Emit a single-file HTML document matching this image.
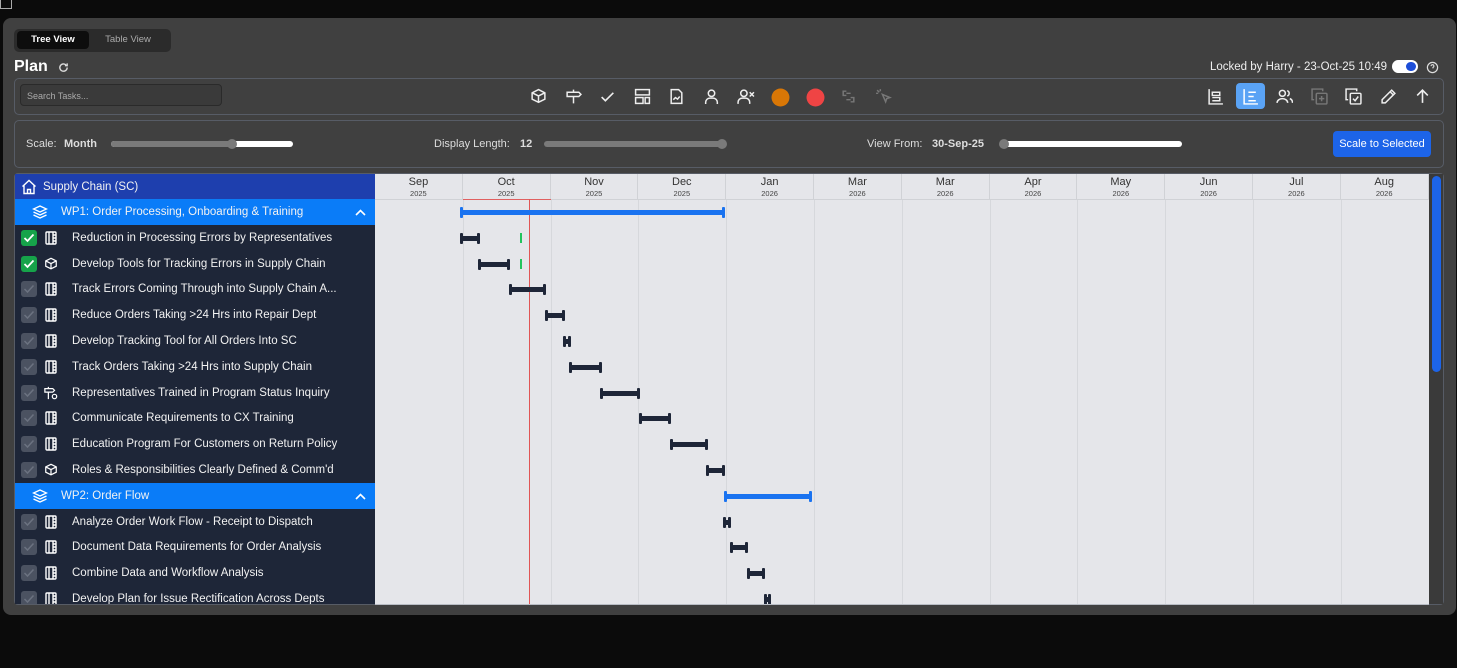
<!DOCTYPE html>
<html><head><meta charset="utf-8"><style>
*{box-sizing:border-box;margin:0;padding:0}
body{width:1457px;height:668px;background:#0b0b0b;font-family:"Liberation Sans",sans-serif;position:relative;overflow:hidden;color:#fff}
.a{position:absolute}
.panel{left:3px;top:18px;width:1453px;height:597px;background:#404040;border-radius:8px}
.box{border:1px solid #575c66;border-radius:5px}
.row{position:absolute;left:15px;width:360px;height:26px;font-size:11.5px}
.cb{position:absolute;left:6px;width:16px;height:16px;border-radius:3px;background:#4b5261}
.cb.g{background:#16a34a}
.cb svg{position:absolute;left:2px;top:3px}
.ic{position:absolute;left:29px;top:6px}
.t{position:absolute;left:57px;top:7px;white-space:nowrap;color:#f2f2f2}
.wp{background:#0a7cf8}
.bar{position:absolute;height:5px;background:#1e2638;border-left:2px solid #1e2638;border-right:2px solid #1e2638}
.bar:before,.bar:after{content:"";position:absolute;top:-3px;width:3px;height:11px;background:#1e2638;border-radius:1px}
.bar:before{left:-2px}.bar:after{right:-2px}
.bb{background:#1a73f0}.bb:before,.bb:after{background:#1a73f0}
.mh{position:absolute;top:174px;height:26px;text-align:center;color:#333;border-right:1px solid #d0d2d6}
.mh b{display:block;font-weight:normal;font-size:11px;margin-top:2px}
.mh i{display:block;font-style:normal;font-size:7.5px;color:#444;margin-top:1px}
.vl{position:absolute;top:200px;height:404px;width:1px;background:#d6d8dc}
.tb svg{position:absolute;top:88px}
#clip{position:absolute;left:0;top:0;width:1457px;height:668px;clip-path:inset(0 0 64px 0)}
</style></head><body>
<div class="a" style="left:0;top:0;width:12px;height:9px;border:1px solid #aaa;border-top:none"></div>
<div class="a panel"></div>
<div class="a" style="left:14px;top:29px;width:157px;height:23px;background:#2b2b2b;border-radius:5px"></div>
<div class="a" style="left:17px;top:31px;width:72px;height:18px;background:#0d0d0d;border-radius:4px;font-size:9.5px;font-weight:bold;text-align:center;line-height:18px">Tree View</div>
<div class="a" style="left:92px;top:31px;width:72px;height:18px;font-size:9.5px;color:#aaa;text-align:center;line-height:18px">Table View</div>
<div class="a" style="left:14px;top:58px;font-size:16px;font-weight:bold">Plan</div>
<svg class="a" style="left:58px;top:62px" width="11" height="11" viewBox="0 0 12 12"><path d="M10 6a4 4 0 1 1-1.2-2.8M10 1.5v2.5H7.5" fill="none" stroke="#ddd" stroke-width="1.5"/></svg>
<div class="a" style="left:1210px;top:61px;font-size:11.5px;color:#eee">Locked by Harry - 23-Oct-25 10:49</div>
<div class="a" style="left:1392px;top:60px;width:26px;height:13px;background:#fff;border-radius:7px"><div class="a" style="left:14px;top:2px;width:10px;height:9px;border-radius:5px;background:#1d4ed8"></div></div>
<svg class="a" style="left:1426px;top:61px" width="13" height="13" viewBox="0 0 14 14"><circle cx="7" cy="7" r="5.5" fill="none" stroke="#ddd" stroke-width="1.3"/><path d="M5.5 5.5a1.5 1.5 0 1 1 2 1.4V8" fill="none" stroke="#ddd" stroke-width="1.2"/></svg>

<div class="a box" style="left:14px;top:78px;width:1430px;height:37px"></div>
<div class="a" style="left:20px;top:84px;width:202px;height:22px;background:#3a3a3a;border:1px solid #2a2a2a;border-radius:4px;font-size:9px;color:#aaa;padding:6px 6px">Search Tasks...</div>
<div class="tb">
<svg class="a" style="left:530px" width="17" height="17" viewBox="0 0 16 16" fill="none" stroke="#eee" stroke-width="1.4"><path d="M8 1.5l6 3v6l-6 3-6-3v-6zM2 4.5l6 3 6-3M8 7.5v6"/></svg>
<svg class="a" style="left:565px" width="17" height="17" viewBox="0 0 16 16" fill="none" stroke="#eee" stroke-width="1.4"><path d="M2 4h11l2 2-2 2H2zM8 1.5V4M8 8v6.5"/></svg>
<svg class="a" style="left:599px" width="17" height="17" viewBox="0 0 16 16" fill="none" stroke="#eee" stroke-width="1.5"><path d="M2.5 8.5l3.5 3.5 7.5-7.5"/></svg>
<svg class="a" style="left:634px" width="17" height="17" viewBox="0 0 16 16" fill="none" stroke="#eee" stroke-width="1.4"><rect x="1.5" y="1.5" width="13" height="5"/><rect x="1.5" y="9" width="7" height="5.5"/><rect x="10.5" y="9" width="4" height="5.5"/></svg>
<svg class="a" style="left:668px" width="17" height="17" viewBox="0 0 16 16" fill="none" stroke="#eee" stroke-width="1.4"><path d="M3 1.5h7l3 3v10H3zM5 11l2-2 2 1.5 2-2.5"/></svg>
<svg class="a" style="left:703px" width="17" height="17" viewBox="0 0 16 16" fill="none" stroke="#eee" stroke-width="1.4"><circle cx="8" cy="5" r="3"/><path d="M2.5 15v-1.5a4 4 0 0 1 4-4h3a4 4 0 0 1 4 4V15"/></svg>
<svg class="a" style="left:737px" width="18" height="17" viewBox="0 0 17 16" fill="none" stroke="#eee" stroke-width="1.4"><circle cx="6.5" cy="5" r="3"/><path d="M1 15v-1.5a4 4 0 0 1 4-4h3a4 4 0 0 1 4 4V15M12 4l4 4M16 4l-4 4"/></svg>
<svg class="a" style="left:771px" width="19" height="19" viewBox="0 0 18 18"><circle cx="9" cy="9" r="8.5" fill="#d97706"/></svg>
<svg class="a" style="left:806px" width="19" height="19" viewBox="0 0 18 18"><circle cx="9" cy="9" r="8.5" fill="#ef4444"/></svg>
<svg class="a" style="left:840px" width="17" height="17" viewBox="0 0 16 16" fill="none" stroke="#777" stroke-width="1.4"><path d="M6 3H3v4h3M10 9h3v4h-3M6 5h4M6 11h4"/></svg>
<svg class="a" style="left:875px" width="17" height="17" viewBox="0 0 16 16" fill="none" stroke="#777" stroke-width="1.4"><path d="M7 6l7 3-3 1-1 3zM2 2l2 2M5 1v2M1 5h2"/></svg>
</div>
<svg class="a" style="left:1207px;top:88px" width="17" height="17" viewBox="0 0 16 16" fill="none" stroke="#eee" stroke-width="1.4"><path d="M2 1v14h13M5 4h7v3H5zM5 9h7v3H5"/></svg>
<div class="a" style="left:1236px;top:83px;width:29px;height:26px;background:#5aa3f5;border-radius:4px"></div>
<svg class="a" style="left:1242px;top:88px" width="17" height="17" viewBox="0 0 16 16" fill="none" stroke="#fff" stroke-width="1.4"><path d="M2 1v14h13M6 4h7M6 8h5M6 12h7"/></svg>
<svg class="a" style="left:1276px;top:88px" width="17" height="17" viewBox="0 0 16 16" fill="none" stroke="#eee" stroke-width="1.4"><circle cx="6" cy="5" r="2.8"/><path d="M1 14a5 4 0 0 1 10 0M10.5 2.5a2.6 2.6 0 0 1 0 5M13 10a4 4 0 0 1 2.5 4"/></svg>
<svg class="a" style="left:1311px;top:88px" width="17" height="17" viewBox="0 0 16 16" fill="none" stroke="#777" stroke-width="1.4"><rect x="5" y="5" width="10" height="10" rx="1"/><path d="M3 11H1V1h10v2M10 7.5v5M7.5 10h5"/></svg>
<svg class="a" style="left:1345px;top:88px" width="17" height="17" viewBox="0 0 16 16" fill="none" stroke="#eee" stroke-width="1.4"><rect x="5" y="5" width="10" height="10" rx="1"/><path d="M3 11H1V1h10v2M7.5 10l2 2 3-4"/></svg>
<svg class="a" style="left:1380px;top:88px" width="17" height="17" viewBox="0 0 16 16" fill="none" stroke="#eee" stroke-width="1.4"><path d="M11 2l3 3-9 9H2v-3zM9.5 3.5l3 3"/></svg>
<svg class="a" style="left:1414px;top:88px" width="17" height="17" viewBox="0 0 16 16" fill="none" stroke="#eee" stroke-width="1.5"><path d="M8 14V2M3 7l5-5 5 5"/></svg>

<div class="a box" style="left:14px;top:120px;width:1430px;height:48px"></div>
<div class="a" style="left:26px;top:138px;font-size:11px;color:#ddd">Scale:</div>
<div class="a" style="left:64px;top:138px;font-size:11px;font-weight:bold;color:#ddd">Month</div>
<div class="a" style="left:111px;top:141px;width:182px;height:6px;border-radius:3px;background:#fff"><div class="a" style="left:0;top:0;width:122px;height:6px;border-radius:3px;background:#7a7a7a"></div><div class="a" style="left:116px;top:-2px;width:10px;height:10px;border-radius:5px;background:#7a7a7a"></div></div>
<div class="a" style="left:434px;top:138px;font-size:11px;color:#ddd">Display Length:</div>
<div class="a" style="left:520px;top:138px;font-size:11px;font-weight:bold;color:#ddd">12</div>
<div class="a" style="left:544px;top:141px;width:182px;height:6px;border-radius:3px;background:#7a7a7a"><div class="a" style="left:173px;top:-2px;width:10px;height:10px;border-radius:5px;background:#7a7a7a"></div></div>
<div class="a" style="left:867px;top:138px;font-size:11px;color:#ddd">View From:</div>
<div class="a" style="left:932px;top:138px;font-size:11px;font-weight:bold;color:#ddd">30-Sep-25</div>
<div class="a" style="left:1000px;top:141px;width:182px;height:6px;border-radius:3px;background:#fff"><div class="a" style="left:-1px;top:-2px;width:10px;height:10px;border-radius:5px;background:#7a7a7a"></div></div>
<div class="a" style="left:1333px;top:131px;width:98px;height:26px;background:#1d64e8;border-radius:4px;font-size:11px;text-align:center;line-height:26px;color:#fff">Scale to Selected</div>

<div class="a" style="left:14px;top:173px;width:1430px;height:432px;border:1px solid #575c66;border-radius:4px"></div>
<div class="a" style="left:15px;top:174px;width:360px;height:430px;background:#1e2638"></div>
<div class="a" style="left:375px;top:174px;width:1054px;height:430px;background:#e5e6ea"></div>
<div class="a" style="left:375px;top:199px;width:1054px;height:1px;background:#d0d2d6"></div>
<div class="a" style="left:1429px;top:174px;width:14px;height:430px;background:#3a3a3a"></div>
<div class="a" style="left:1432px;top:176px;width:9px;height:196px;background:#1d64e8;border-radius:5px"></div>

<div class="row" style="top:174px;background:#1e3fae"><svg class="a" style="left:6px;top:5px" width="16" height="16" viewBox="0 0 16 16" fill="none" stroke="#fff" stroke-width="1.4"><path d="M1.5 7.5L8 1.5l6.5 6M3 6v8.5h10V6M6.5 14.5v-4h3v4"/></svg><span class="t" style="left:28px">Supply Chain (SC)</span></div>

<div id="clip"><div id="rows"></div><div id="chart"></div></div>
<script>
var L='<svg width="14" height="14" viewBox="0 0 14 14" fill="none" stroke="#fff" stroke-width="1.4"><rect x="2" y="1" width="10" height="12" rx="1"/><path d="M5 1v12M9 1v12M9 4h3M9 7h3M9 10h3"/></svg>';
var P='<svg width="14" height="14" viewBox="0 0 16 16" fill="none" stroke="#fff" stroke-width="1.4"><path d="M8 1.5l6 3v6l-6 3-6-3v-6zM2 4.5l6 3 6-3M8 7.5v6"/></svg>';
var S='<svg width="14" height="14" viewBox="0 0 16 16" fill="none" stroke="#fff" stroke-width="1.4"><path d="M1 3h9l2 2-2 2H1zM5 1v2M5 7v8"/><circle cx="12" cy="12" r="2.5"/></svg>';
var Y='<svg width="16" height="16" viewBox="0 0 16 16" fill="none" stroke="#fff" stroke-width="1.3"><path d="M8 2l6.5 3L8 8 1.5 5zM1.5 8L8 11l6.5-3M1.5 11L8 14l6.5-3"/></svg>';
var CK='<svg width="12" height="10" viewBox="0 0 12 10" fill="none" stroke-width="1.8"><path d="M1.5 5l3 3 6-6.5" stroke="#fff"/></svg>';
var CKd='<svg width="12" height="10" viewBox="0 0 12 10" fill="none" stroke-width="1.5"><path d="M1.5 5l3 3 6-6.5" stroke="#6b7280"/></svg>';
var rows=[['w','WP1: Order Processing, Onboarding & Training',460,725],
['g','Reduction in Processing Errors by Representatives',460,480,L,520],
['g','Develop Tools for Tracking Errors in Supply Chain',478,510,P,520],
['n','Track Errors Coming Through into Supply Chain A...',509,546,L],
['n','Reduce Orders Taking >24 Hrs into Repair Dept',545,565,L],
['n','Develop Tracking Tool for All Orders Into SC',563,571,L],
['n','Track Orders Taking >24 Hrs into Supply Chain',569,602,L],
['n','Representatives Trained in Program Status Inquiry',600,640,S],
['n','Communicate Requirements to CX Training',639,671,L],
['n','Education Program For Customers on Return Policy',670,708,L],
['n','Roles & Responsibilities Clearly Defined & Comm\'d',706,725,P],
['w','WP2: Order Flow',724,812],
['n','Analyze Order Work Flow - Receipt to Dispatch',723,731,L],
['n','Document Data Requirements for Order Analysis',730,748,L],
['n','Combine Data and Workflow Analysis',747,765,L],
['n','Develop Plan for Issue Rectification Across Depts',764,771,L]];
var h='',c='';
var m=['Sep','Oct','Nov','Dec','Jan','Mar','Mar','Apr','May','Jun','Jul','Aug'],yr=['2025','2025','2025','2025','2026','2026','2026','2026','2026','2026','2026','2026'];
for(var i=0;i<12;i++){var x=375+i*87.8;c+='<div class="mh" style="left:'+x+'px;width:87.8px"><b>'+m[i]+'</b><i>'+yr[i]+'</i></div>';if(i>0)c+='<div class="vl" style="left:'+x+'px"></div>';}
c+='<div class="a" style="left:463px;top:199px;width:88px;height:1px;background:#e06060"></div><div class="a" style="left:529px;top:199px;width:1px;height:405px;background:#e05555"></div>';
rows.forEach(function(r,i){var top=199+25.8*i;
 if(r[0]=='w'){h+='<div class="row wp" style="top:'+top+'px"><span class="a" style="left:17px;top:5px">'+Y+'</span><span class="t" style="left:46px">'+r[1]+'</span><svg class="a" style="left:340px;top:10px" width="11" height="7" viewBox="0 0 11 7" fill="none" stroke="#fff" stroke-width="1.6"><path d="M1 6l4.5-4.5L10 6"/></svg></div>';}
 else{h+='<div class="row" style="top:'+top+'px"><div class="cb '+(r[0]=='g'?'g':'')+'" style="top:5px">'+(r[0]=='g'?CK:CKd)+'</div><span class="ic">'+r[4]+'</span><span class="t">'+r[1]+'</span></div>';}
 var y=top+11;
 c+='<div class="bar '+(r[0]=='w'?'bb':'')+'" style="left:'+r[2]+'px;top:'+y+'px;width:'+(r[3]-r[2])+'px"></div>';
 if(r[5])c+='<div class="a" style="left:'+r[5]+'px;top:'+(y-3)+'px;width:2px;height:10px;background:#22c55e"></div>';
});
document.getElementById('rows').innerHTML=h;
document.getElementById('chart').innerHTML=c;
</script>
<div class="a" style="left:375px;top:604px;width:1054px;height:1px;background:#b8bcc4"></div>
</body></html>
